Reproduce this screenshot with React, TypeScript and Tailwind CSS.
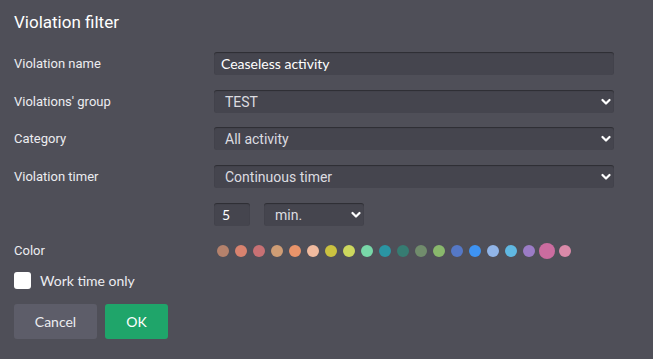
import React from 'react';

const colors = [
  '#b5826c', '#d9836f', '#c87174', '#cf9d75', '#e9946a', '#f1bb9f', '#cbc240',
  '#cdd85e', '#78d7a8', '#2a95a3', '#367c72', '#718c6c', '#89b86c', '#5578c6',
  '#3e93f2', '#91b5e8', '#60b8e2', '#9b7cc6', '#cb6c9f', '#da8aa9',
];

function Chevron() {
  return (
    <svg width="10" height="8" viewBox="0 0 10 8" className="absolute right-[3px] top-1/2 -translate-y-1/2">
      <path d="M1.5 2 L5 5.5 L8.5 2" fill="none" stroke="#ffffff" strokeWidth="2.2" strokeLinecap="round" strokeLinejoin="round" />
    </svg>
  );
}

function Select({ value, className }: { value: string; className: string }) {
  return (
    <div className={`relative h-[23px] rounded-[3px] bg-[#45454e] shadow-[inset_0_1px_1px_rgba(0,0,0,0.35)] ${className}`}>
      <span className="absolute left-[11px] top-1/2 -translate-y-1/2 text-[14px] text-[#dcdce0] font-['Roboto',sans-serif]">{value}</span>
      <Chevron />
    </div>
  );
}

function Row({ label, children, className = '' }: { label: string; children: React.ReactNode; className?: string }) {
  return (
    <div className={`flex items-center ${className}`}>
      <div className="w-[200px] text-[13px] text-[#ececf0] font-['Roboto',sans-serif]">{label}</div>
      {children}
    </div>
  );
}

export default function App() {
  return (
    <div className="w-[653px] h-[359px] bg-[#4f4f58] px-[14px] pt-[11px] font-['Roboto',sans-serif]">
      <h1 className="text-[17px] leading-[22px] text-white">Violation filter</h1>

      <Row label="Violation name" className="mt-[19px]">
        <div className="h-[23px] w-[400px] rounded-[3px] bg-[#45454e] shadow-[inset_0_1px_1px_rgba(0,0,0,0.35)] flex items-center pl-[7px] text-[14px] text-white font-['Lato',sans-serif]">
          Ceaseless activity
        </div>
      </Row>
      <Row label="Violations' group" className="mt-[15px]">
        <Select value="TEST" className="w-[400px]" />
      </Row>
      <Row label="Category" className="mt-[14px]">
        <Select value="All activity" className="w-[400px]" />
      </Row>
      <Row label="Violation timer" className="mt-[15px]">
        <Select value="Continuous timer" className="w-[400px]" />
      </Row>
      <div className="flex items-center mt-[15px] pl-[200px] gap-[14px]">
        <div className="h-[23px] w-[36px] rounded-[3px] bg-[#45454e] shadow-[inset_0_1px_1px_rgba(0,0,0,0.35)] flex items-center pl-[8px] text-[14px] text-white font-['Lato',sans-serif]">5</div>
        <Select value="min." className="w-[100px]" />
      </div>
      <Row label="Color" className="mt-[13px]">
        <div className="flex items-center h-[24px]">
          {colors.map((c, i) => (
            <div key={c} className="w-[18px] flex justify-center">
              <div
                className={i === 18 ? 'w-[16px] h-[16px] rounded-full' : 'w-[12px] h-[12px] rounded-full'}
                style={{ backgroundColor: c }}
              />
            </div>
          ))}
        </div>
      </Row>
      <label className="flex items-center mt-[7px] gap-[9px]">
        <span className="w-[17px] h-[17px] rounded-[3px] bg-white" />
        <span className="text-[14px] text-[#ececf0] font-['Lato',sans-serif]">Work time only</span>
      </label>
      <div className="flex mt-[13px] gap-[8px]">
        <button className="w-[83px] h-[35px] rounded-[3px] bg-[#5d5d69] text-[14px] text-[#ececf0] font-['Lato',sans-serif]">Cancel</button>
        <button className="w-[63px] h-[35px] rounded-[3px] bg-[#1fa56a] text-[14px] text-white font-['Lato',sans-serif]">OK</button>
      </div>
    </div>
  );
}
